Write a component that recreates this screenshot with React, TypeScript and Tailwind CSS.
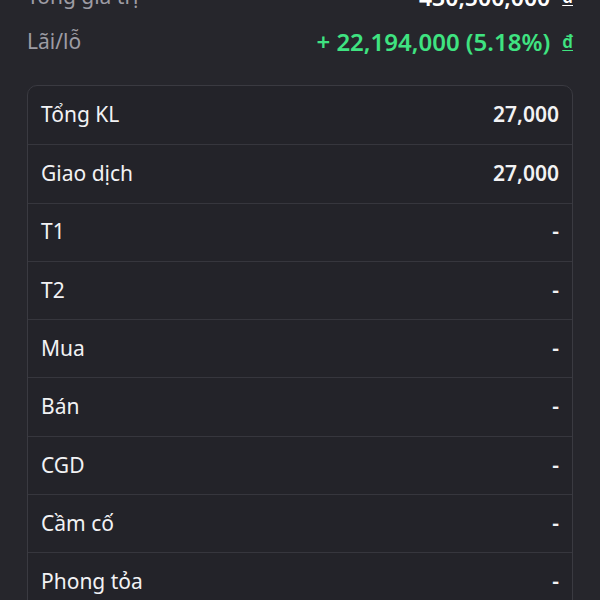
import React from 'react';

const rows: { label: string; value: string }[] = [
  { label: 'Tổng KL', value: '27,000' },
  { label: 'Giao dịch', value: '27,000' },
  { label: 'T1', value: '-' },
  { label: 'T2', value: '-' },
  { label: 'Mua', value: '-' },
  { label: 'Bán', value: '-' },
  { label: 'CGD', value: '-' },
  { label: 'Cầm cố', value: '-' },
  { label: 'Phong tỏa', value: '-' },
];

export default function App() {
  return (
    <div
      className="w-[600px] h-[600px] overflow-hidden bg-[#26262c] text-white"
      style={{ fontFamily: '"Noto Sans", "Open Sans", sans-serif' }}
    >
      <div className="px-[27px] mt-[-27px]">
        {/* Summary */}
        <div className="flex items-center justify-between h-[48px] text-[21px]">
          <span className="text-[#9d9ca4]">Tổng giá trị</span>
          <span className="flex items-center gap-[12px] font-semibold text-[23px]">
            430,500,000
            <span className="underline underline-offset-2 text-[17px]">đ</span>
          </span>
        </div>
        <div className="flex items-center justify-between h-[42px] text-[21px]">
          <span className="text-[#9d9ca4]">Lãi/lỗ</span>
          <span className="flex items-center gap-[12px] font-semibold text-[24px] text-[#3fe381]">
            + 22,194,000 (5.18%)
            <span className="underline underline-offset-2 text-[17px]">đ</span>
          </span>
        </div>

        {/* Detail table */}
        <div className="mt-[22px] rounded-[10px] border border-[#3a3a41] bg-[#232329]">
          {rows.map((r, i) => (
            <div
              key={r.label}
              className={`flex items-center justify-between h-[58.3px] px-[13px] text-[21px] ${
                i > 0 ? 'border-t border-[#36363d]' : ''
              }`}
            >
              <span className="text-[#f2f2f4]">{r.label}</span>
              <span className="font-semibold text-[#f2f2f4]">{r.value}</span>
            </div>
          ))}
        </div>
      </div>
    </div>
  );
}
